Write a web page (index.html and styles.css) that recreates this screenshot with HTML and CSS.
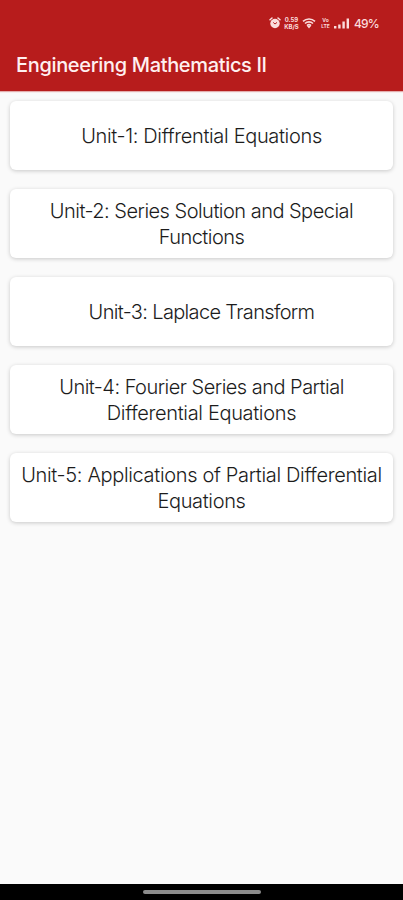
FILE: index.html
```
<!DOCTYPE html>
<html lang="en">
<head>
    <meta charset="UTF-8">
    <meta name="viewport" content="width=device-width, initial-scale=1.0">
    <title>Engineering Mathematics II</title>
    <link rel="stylesheet" href="styles.css">
</head>
<body>
    <header class="app-header">
        <div class="status-bar">
            <svg class="alarm" width="12" height="12" viewBox="0 0 12 12">
                <circle cx="6" cy="6.5" r="4.7" fill="currentColor"/>
                <path d="M1 2.8L3 1M11 2.8L9 1" stroke="currentColor" stroke-width="1.5" stroke-linecap="round"/>
                <path d="M4.2 5.4L6 7l2-1.6" fill="none" stroke="#b71c1c" stroke-width="1"/>
            </svg>
            <div class="net-speed"><span>0.59</span><span>KB/S</span></div>
            <svg class="wifi" width="14" height="12" viewBox="0 0 14 12">
                <path d="M1 4.3a8.8 8.8 0 0 1 12 0M3 6.5a5.8 5.8 0 0 1 8 0M5 8.6a3 3 0 0 1 4 0" fill="none" stroke="currentColor" stroke-width="1.6"/>
                <path d="M4.8 8.8h4.4L7 11.4z" fill="currentColor"/>
            </svg>
            <div class="volte"><span>Vo</span><span>LTE</span></div>
            <svg class="signal" width="16" height="11" viewBox="0 0 16 11">
                <path d="M0 8h2.4v2.5H0zM4.2 6.4h2.4v4.1H4.2zM8.4 3.4h2.4v7.1H8.4zM12.6 0.6H15v9.9h-2.4z" fill="currentColor"/>
            </svg>
            <span class="battery">49%</span>
        </div>
        <h1>Engineering Mathematics II</h1>
    </header>
    <main class="units">
        <div class="card wide"><span>Unit-1: Diffrential Equations</span></div>
        <div class="card"><span>Unit-2: Series Solution and Special<br>Functions</span></div>
        <div class="card narrow"><span>Unit-3: Laplace Transform</span></div>
        <div class="card"><span>Unit-4: Fourier Series and Partial<br><span class="wide">Differential Equations</span></span></div>
        <div class="card wide"><span>Unit-5: Applications of Partial Differential<br>Equations</span></div>
    </main>
    <footer class="nav-bar">
        <div class="handle"></div>
    </footer>
</body>
</html>
```
FILE: styles.css
```
body {
    font-family: Inter, sans-serif;
    margin: 0;
    height: 900px;
    display: flex;
    flex-direction: column;
    background-color: #fafafa;
    color: #1c1c1c;
    overflow: hidden;
}

.app-header {
    height: 91px;
    background-color: #b71c1c;
    color: #fbdcdc;
    box-shadow: 0 1px 1px rgba(183, 28, 28, 0.35);
}

.status-bar {
    display: flex;
    align-items: center;
    height: 16px;
    padding: 15px 0 0 269px;
}

.net-speed,
.volte {
    display: flex;
    flex-direction: column;
    align-items: center;
    font-size: 6px;
    font-weight: 700;
    line-height: 7px;
}

.net-speed {
    width: 17px;
    margin-left: 2px;
}

.wifi {
    margin-left: 2px;
}

.volte {
    width: 9px;
    margin-left: 5px;
    font-size: 5px;
    line-height: 6px;
}

.signal {
    margin-left: 4px;
}

.battery {
    margin-left: 4px;
    font-size: 12px;
    font-weight: 500;
    letter-spacing: -0.9px;
}

h1 {
    margin: 20px 0 0 16px;
    font-size: 20px;
    font-weight: 500;
    line-height: 28px;
    letter-spacing: -0.34px;
    white-space: nowrap;
    color: #fff0f0;
}

.units {
    flex: 1;
    display: flex;
    flex-direction: column;
    gap: 19px;
    padding: 10px 10px 0;
}

.card {
    display: flex;
    align-items: center;
    justify-content: center;
    height: 69px;
    border-radius: 6px;
    background-color: #fff;
    box-shadow: 0 1px 4px rgba(0, 0, 0, 0.2);
    font-size: 20px;
    font-weight: 300;
    line-height: 26px;
    letter-spacing: -0.52px;
    text-align: center;
    white-space: nowrap;
}

.wide {
    letter-spacing: -0.34px;
}

.narrow {
    letter-spacing: -0.66px;
}

.nav-bar {
    display: flex;
    align-items: center;
    justify-content: center;
    height: 16px;
    background-color: #000;
}

.handle {
    width: 118px;
    height: 4px;
    border-radius: 2px;
    background-color: #8c8c8c;
}
```
